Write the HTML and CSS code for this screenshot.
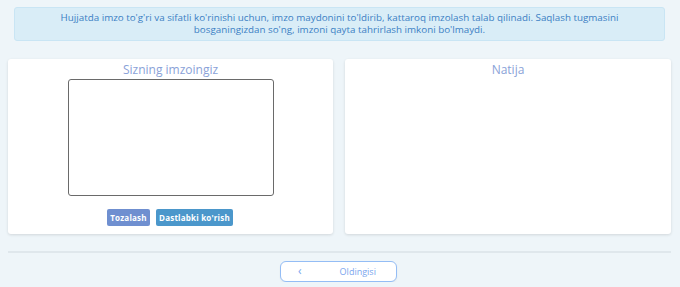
FILE: index.html
```html
<!DOCTYPE html>
<html lang="uz">
<head>
    <meta charset="UTF-8">
    <meta name="viewport" content="width=device-width, initial-scale=1.0">
    <title>Imzo</title>
    <link rel="stylesheet" href="styles.css">
</head>
<body>
    <div class="page">
        <!-- Notice -->
        <div class="notice">
            <p>Hujjatda imzo to'g'ri va sifatli ko'rinishi uchun, imzo maydonini to'ldirib, kattaroq imzolash talab qilinadi. Saqlash tugmasini</p>
            <p>bosganingizdan so'ng, imzoni qayta tahrirlash imkoni bo'lmaydi.</p>
        </div>

        <!-- Cards -->
        <div class="cards">
            <div class="card">
                <div class="card-title">Sizning imzoingiz</div>
                <div class="sign-pad"></div>
                <div class="card-actions">
                    <button class="btn btn-clear">Tozalash</button>
                    <button class="btn btn-preview">Dastlabki ko'rish</button>
                </div>
            </div>
            <div class="card">
                <div class="card-title">Natija</div>
            </div>
        </div>

        <div class="divider"></div>

        <div class="footer">
            <button class="btn-prev">
                <span class="chevron">&lsaquo;</span>
                <span class="prev-label">Oldingisi</span>
            </button>
        </div>
    </div>
</body>
</html>
```

FILE: styles.css
```css
body {
    margin: 0;
    padding: 0;
    font-family: "Open Sans", sans-serif;
    background-color: #eef5f9;
}

.page {
    padding: 7px 9px 0 8px;
}

.notice {
    margin: 0 6px;
    height: 34px;
    padding-top: 4px;
    box-sizing: border-box;
    background-color: #d9edf7;
    border: 1px solid #c9e5f4;
    border-radius: 3px;
    color: #3b7fc4;
    font-size: 9.8px;
    line-height: 12px;
    text-align: center;
}

.notice p {
    margin: 0;
    white-space: nowrap;
}

.cards {
    display: grid;
    grid-template-columns: 325px 326px;
    gap: 12px;
    margin-top: 18px;
}

.card {
    background-color: white;
    height: 175px;
    border-radius: 3px;
    box-shadow: 0 1px 3px rgba(0, 0, 0, 0.12);
    display: flex;
    flex-direction: column;
    align-items: center;
}

.card-title {
    margin-top: 3px;
    color: #8aa2d8;
    font-size: 12px;
    line-height: 16px;
}

.sign-pad {
    width: 204px;
    height: 115px;
    margin-top: 1px;
    border: 1px solid #6a6a6a;
    border-radius: 3px;
}

.card-actions {
    display: flex;
    gap: 6px;
    margin-top: 13px;
    padding-right: 1px;
}

.btn {
    height: 17px;
    padding: 0;
    border: none;
    border-radius: 2px;
    color: white;
    font-family: "Open Sans", sans-serif;
    font-size: 8px;
    font-weight: bold;
    letter-spacing: 0.2px;
    white-space: nowrap;
}

.btn-clear {
    width: 43px;
    background-color: #6f8fd0;
}

.btn-preview {
    width: 77px;
    background-color: #4b97cb;
}

.divider {
    height: 2px;
    margin-top: 17px;
    background-color: #dfe7ec;
}

.footer {
    display: flex;
    justify-content: center;
    padding-top: 8px;
    padding-right: 2px;
}

.btn-prev {
    width: 117px;
    height: 21px;
    display: flex;
    align-items: center;
    padding: 0 0 0 17px;
    background-color: white;
    border: 1px solid #94bdf5;
    border-radius: 6px;
    box-shadow: 0 1px 2px rgba(0, 0, 0, 0.06);
    color: #7aa6ee;
    font-family: "Open Sans", sans-serif;
    font-size: 9px;
}

.chevron {
    font-size: 12px;
    line-height: 10px;
    margin-top: -2px;
}

.prev-label {
    margin-left: 38px;
}
```
